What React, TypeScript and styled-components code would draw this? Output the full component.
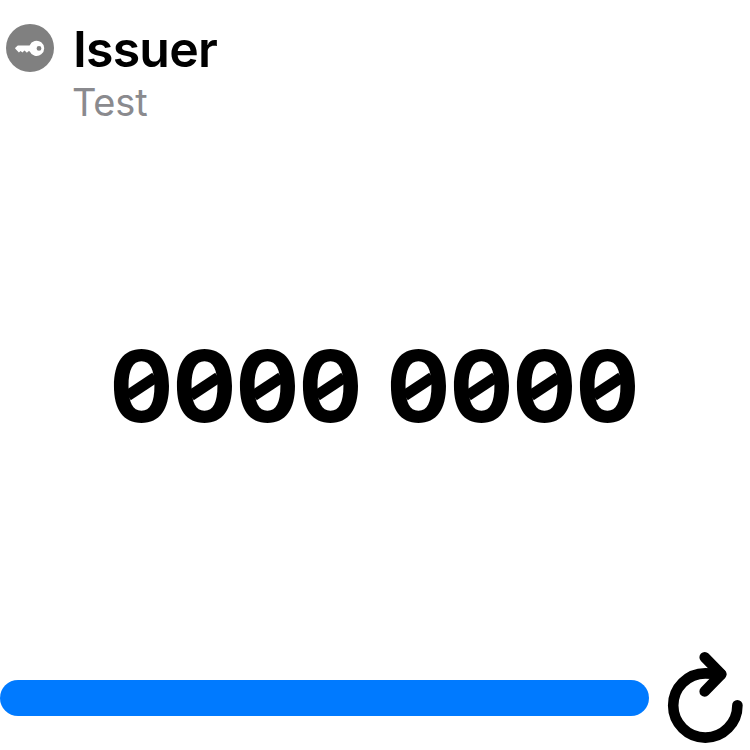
import React from "react";
import styled, { createGlobalStyle } from "styled-components";

const GlobalStyle = createGlobalStyle`
  body { margin: 0; background: #fff; }
`;

const Screen = styled.main`
  width: 750px;
  height: 750px;
  display: flex;
  flex-direction: column;
  overflow: hidden;
  background: #fff;
  color: #000;
  font-family: Inter, "Liberation Sans", sans-serif;
`;

const Header = styled.header`
  display: flex;
  align-items: flex-start;
  height: 125px;
  padding: 24px 0 0 6px;
  gap: 18px;
  box-sizing: border-box;
`;

const Titles = styled.div`
  display: flex;
  flex-direction: column;
`;

const Issuer = styled.h1`
  margin: 0;
  padding-left: 1px;
  font-size: 50px;
  line-height: 50px;
  font-weight: 600;
  letter-spacing: -0.8px;
`;

const Account = styled.p`
  margin: 0;
  font-size: 38px;
  line-height: 56px;
  font-weight: 400;
  letter-spacing: -0.2px;
  color: #8a8a8e;
`;

const Code = styled.div`
  flex: 1;
  display: flex;
  justify-content: center;
  align-items: center;
  gap: 25px;
  padding-right: 1px;
  font-size: 99px;
  line-height: 120px;
  font-weight: 700;
  font-feature-settings: "tnum" 1;
`;

const Group = styled.div`
  display: flex;
`;

const Digit = styled.span<{ $slashed: boolean }>`
  position: relative;
  width: 63px;
  display: flex;
  justify-content: center;

  &::after {
    content: "";
    display: ${(p) => (p.$slashed ? "block" : "none")};
    position: absolute;
    left: 15px;
    top: 55px;
    width: 33px;
    height: 11px;
    background: currentColor;
    transform: rotate(-33.5deg);
  }
`;

const Footer = styled.footer`
  display: flex;
  height: 104px;
  align-items: center;
  gap: 13px;
`;

const Progress = styled.div`
  width: 649px;
  height: 36px;
  border-radius: 18px;
  background: #007aff;
`;

const RefreshButton = styled.button`
  width: 88px;
  height: 104px;
  padding: 0;
  border: 0;
  background: none;
  color: #000;
`;

const Glyph = styled.svg`
  display: block;
  flex: none;
`;

const KeyBadge = () => (
  <Glyph width="48" height="48" viewBox="0 0 48 48">
    <circle cx="24" cy="24" r="24" fill="#808080" />
    <path
      fill="#fff"
      fillRule="evenodd"
      d="M11.8 21.4H23.6A7.6 7.6 0 1 1 23.6 27.2H22.4L20.9 28.8L18.5 26.6L16.4 28.6L14.6 26.9L12.9 28.6L9.3 24.8Q8.9 24.3 9.3 23.8ZM33 22A2.4 2.4 0 1 0 33 26.8A2.4 2.4 0 1 0 33 22Z"
    />
  </Glyph>
);

const RefreshIcon = () => (
  <Glyph
    width="88"
    height="104"
    viewBox="662 646 88 104"
    fill="none"
    stroke="currentColor"
    strokeWidth="10.6"
    strokeLinecap="round"
    strokeLinejoin="round"
  >
    <path d="M737.4 705.3A32.1 32.1 0 1 1 705.3 673.4Q711 673.4 721 674.2" />
    <path d="M704.7 657.3L721.3 674.2L704.7 691.4" />
  </Glyph>
);

const App: React.FC = () => (
  <>
    <GlobalStyle />
    <Screen>
      <Header>
        <KeyBadge />
        <Titles>
          <Issuer>Issuer</Issuer>
          <Account>Test</Account>
        </Titles>
      </Header>
      <Code>
        {["0000", "0000"].map((group, g) => (
          <Group key={g}>
            {group.split("").map((digit, i) => (
              <Digit key={i} $slashed={digit === "0"}>
                {digit}
              </Digit>
            ))}
          </Group>
        ))}
      </Code>
      <Footer>
        <Progress />
        <RefreshButton aria-label="Refresh">
          <RefreshIcon />
        </RefreshButton>
      </Footer>
    </Screen>
  </>
);

export default App;
